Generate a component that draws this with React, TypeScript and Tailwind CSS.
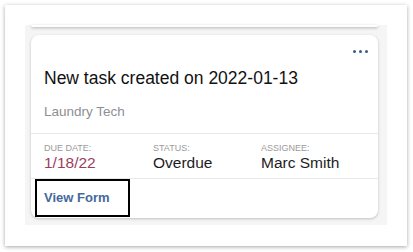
const FIELDS: { label: string; value: string; valueClass: string }[] = [
  { label: "Due date:", value: "1/18/22", valueClass: "text-[#9c3d5c]" },
  { label: "Status:", value: "Overdue", valueClass: "text-[#1c1c1e]" },
  { label: "Assignee:", value: "Marc Smith", valueClass: "text-[#1c1c1e]" },
];

export default function App() {
  return (
    <div
      className="h-[252px] w-[413px] overflow-hidden bg-white pl-[5px] pt-[5px]"
      style={{ fontFamily: '"Liberation Sans", Arial, sans-serif' }}
    >
      <div className="h-[241px] w-[402px] bg-white px-[20px] pt-[20px] shadow-[0_1px_4px_rgba(0,0,0,0.35)]">
        <div className="h-[200px] bg-[#f5f5f5] pl-[6px] pr-[9px]">
          {/* tail of the previous card */}
          <div className="h-[2px] rounded-b-lg bg-white shadow-[0_1px_3px_rgba(0,0,0,0.3)]" />
          <div className="mt-[8px] h-[183px] rounded-lg bg-white shadow-[0_1px_3px_rgba(0,0,0,0.22)]">
            <div className="flex justify-end pr-[10px] pt-[15px]">
              <span className="flex gap-[3px]">
                <span className="h-[3px] w-[3px] rounded-full bg-[#3b5b86]" />
                <span className="h-[3px] w-[3px] rounded-full bg-[#3b5b86]" />
                <span className="h-[3px] w-[3px] rounded-full bg-[#3b5b86]" />
              </span>
            </div>
            <div className="px-[13px]">
              <p className="mt-[14px] text-[17.5px] leading-[22px] text-[#111]">
                New task created on 2022-01-13
              </p>
              <p className="mt-[14px] text-[13.5px] leading-[18px] text-[#8e8e93]">
                Laundry Tech
              </p>
            </div>
            <div className="mt-[12px] border-t border-[#e8e8e8]" />
            <div className="grid grid-cols-[109px_108px_1fr] px-[13px] pt-[9px]">
              {FIELDS.map((f) => (
                <div key={f.label} className="flex flex-col">
                  <span className="text-[9px] uppercase leading-[11px] text-[#9a9a9a]">
                    {f.label}
                  </span>
                  <span className={`text-[15.5px] leading-[18px] ${f.valueClass}`}>
                    {f.value}
                  </span>
                </div>
              ))}
            </div>
            <div className="mt-[6px] border-t border-[#e8e8e8]" />
            <div className="pl-[4px]">
              <div className="flex h-[38px] w-[95px] items-center border-2 border-black pl-[7px] text-[13px] font-bold text-[#44699a]">
                View Form
              </div>
            </div>
          </div>
        </div>
      </div>
    </div>
  );
}
